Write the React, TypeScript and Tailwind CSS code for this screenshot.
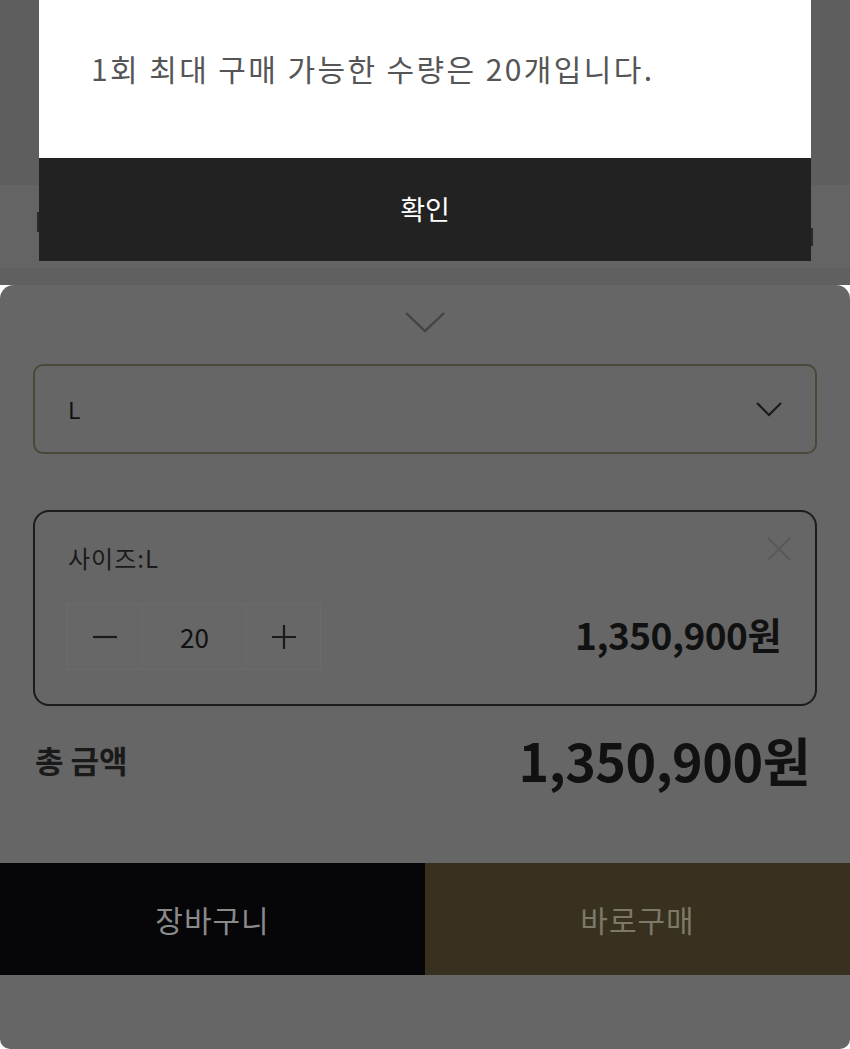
import React from "react";

const F = { fontFamily: '"Noto Sans CJK KR", "Noto Sans", sans-serif' };

export default function App() {
  return (
    <div className="w-[850px] h-[1049px] bg-white" style={F}>
      <div className="relative w-[850px] h-[1049px] overflow-hidden rounded-b-[10px] flex flex-col">
        {/* background page */}
        <div className="h-[185px] bg-[#5e5e5e]" />
        <div className="h-[83px] bg-[#646464] flex justify-between items-start px-[37px]">
          <div className="mt-[27px] w-[3px] h-[20px] bg-[#2a2a2a]" />
          <div className="mt-[43px] w-[3px] h-[18px] bg-[#2a2a2a]" />
        </div>
        <div className="h-[17px] bg-[#606060]" />
        {/* bottom sheet */}
        <div className="flex-1 bg-[#666666] rounded-t-[14px] flex flex-col">
          <div className="px-[33px]">
            <div className="h-[79px] flex justify-center pt-[25px]">
              <svg width="42" height="24" viewBox="0 0 42 24" fill="none">
                <path d="M2 3 L21 21 L40 3" stroke="#444" strokeWidth="2.4" />
              </svg>
            </div>
            <div className="h-[90px] border-2 border-[#4b4839] rounded-[10px] flex items-center justify-between pl-[33px] pr-[32px]">
              <span className="text-[23px] text-[#111] leading-none">L</span>
              <svg width="28" height="18" viewBox="0 0 28 18" fill="none">
                <path d="M2 3 L14 15 L26 3" stroke="#1a1a1a" strokeWidth="2.2" />
              </svg>
            </div>
            <div className="mt-[56px] h-[196px] border-2 border-[#1c1c1c] rounded-[16px] relative pl-[31px] pr-[34px] pt-[29px]">
              <div className="pl-[2px] text-[24px] tracking-[1px] text-[#1a1a1a] leading-[34px]">사이즈:L</div>
              <svg className="absolute top-[24px] right-[23px]" width="26" height="26" viewBox="0 0 26 26" fill="none">
                <path d="M2 2 L24 24 M24 2 L2 24" stroke="#595959" strokeWidth="2" />
              </svg>
              <div className="mt-[28px] flex items-center justify-between">
                <div className="flex h-[67px]">
                  <div className="w-[77px] bg-[#676767] border border-[#6b6b6b] flex items-center justify-center">
                    <svg width="26" height="4" viewBox="0 0 26 4"><path d="M1 2 H25" stroke="#1a1a1a" strokeWidth="2.2" /></svg>
                  </div>
                  <div className="w-[103px] bg-[#676767] border-y border-[#6b6b6b] flex items-center justify-center text-[26px] text-[#111]">20</div>
                  <div className="w-[75px] bg-[#676767] border border-[#6b6b6b] flex items-center justify-center">
                    <svg width="26" height="26" viewBox="0 0 26 26"><path d="M1 13 H25 M13 1 V25" stroke="#1a1a1a" strokeWidth="2.2" /></svg>
                  </div>
                </div>
                <div className="pb-[4px] text-[37px] font-semibold text-[#111] tracking-[-0.5px] leading-none">1,350,900원</div>
              </div>
            </div>
            <div className="h-[118px] pb-[10px] flex items-center justify-between pl-[2px] pr-[7px]">
              <span className="text-[31px] font-bold text-[#1a1a1a]">총 금액</span>
              <span className="text-[52px] font-bold text-[#111] tracking-[-0.5px] leading-none">1,350,900원</span>
            </div>
          </div>
          <div className="mt-[39px] h-[112px] flex">
            <div className="w-[425px] bg-[#060608] flex items-center justify-center text-[30px] tracking-[1px] text-[#8a8a8a]">장바구니</div>
            <div className="flex-1 bg-[#38311f] flex items-center justify-center text-[30px] tracking-[1px] text-[#7d7869]">바로구매</div>
          </div>
        </div>
        {/* modal */}
        <div className="absolute top-0 left-[39px] w-[772px]">
          <div className="h-[158px] bg-white pl-[52px] pt-[46px]">
            <p className="text-[30px] tracking-[2.4px] text-[#555] leading-[44px]">1회 최대 구매 가능한 수량은 20개입니다.</p>
          </div>
          <div className="h-[103px] bg-[#222222] flex items-center justify-center text-[27px] text-white">확인</div>
        </div>
      </div>
    </div>
  );
}
